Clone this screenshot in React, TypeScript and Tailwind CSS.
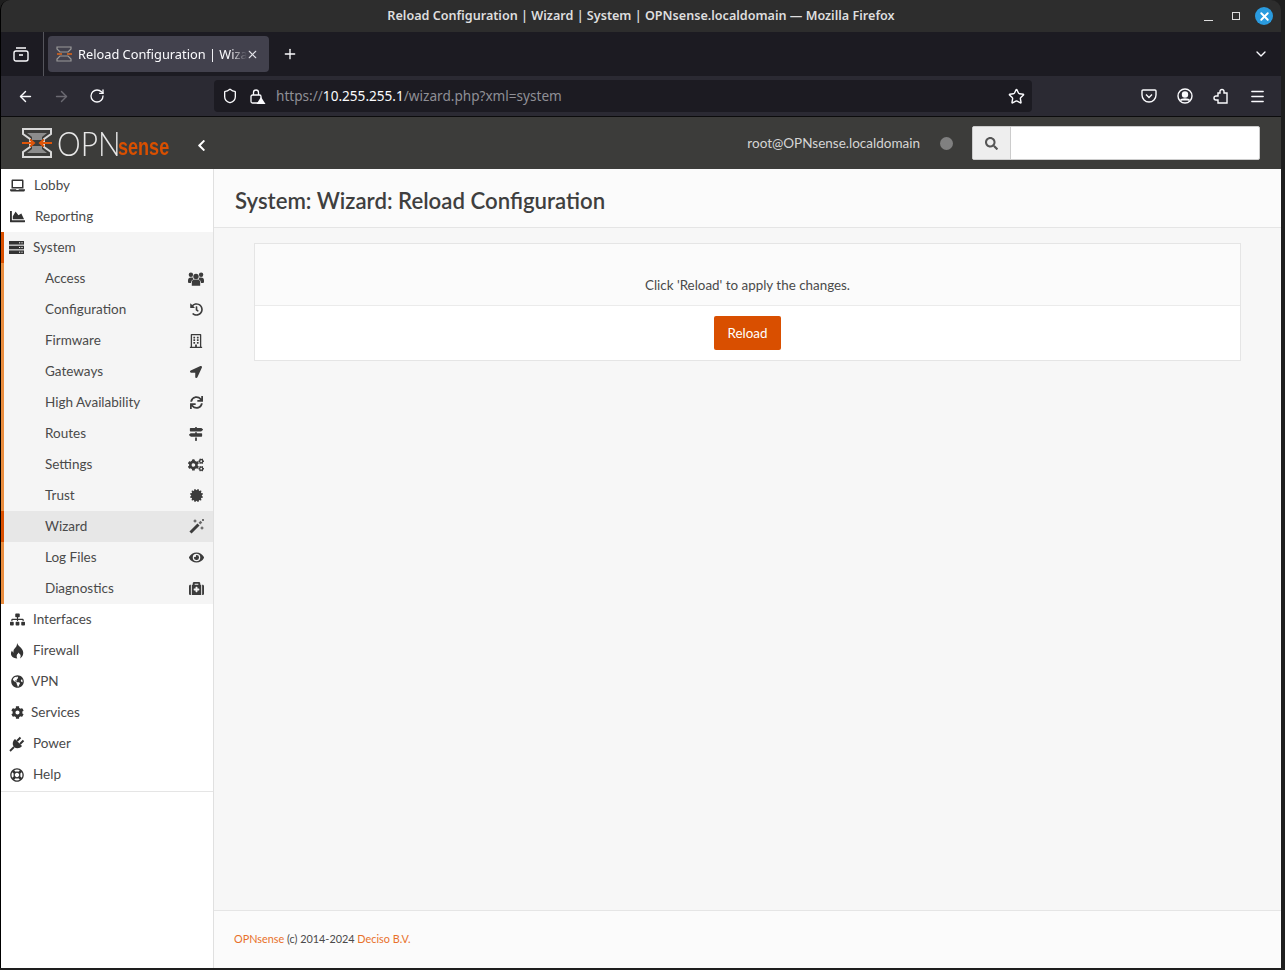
import { ReactNode } from "react"
import {
  FaLaptop, FaChartArea, FaHistory, FaRegBuilding, FaLocationArrow, FaSync,
  FaMapSigns, FaCogs, FaCertificate, FaEye, FaMedkit, FaSitemap, FaGlobeAmericas,
  FaCog, FaRegLifeRing, FaSearch, FaChevronLeft,
} from "react-icons/fa"
import { ArrowLeft, ArrowRight, RotateCw, Shield, Star, Menu, Plus, X, ChevronDown } from "lucide-react"

function UsersIcon() {
  return (
    <svg width="16" height="14" viewBox="0 0 16 14" fill="currentColor">
      <circle cx="8" cy="4.4" r="2.7" />
      <circle cx="2.9" cy="2.8" r="2.2" />
      <circle cx="13.1" cy="2.8" r="2.2" />
      <path d="M3.8 13.8v-3.4a3 3 0 0 1 3-3h2.4a3 3 0 0 1 3 3v3.4z" />
      <path d="M0 8.6a3 3 0 0 1 3-3h1.6a4 4 0 0 0 .9 1.6A4 4 0 0 0 3 10.4V11H1a1 1 0 0 1-1-1z" />
      <path d="M16 8.6a3 3 0 0 0-3-3h-1.6a4 4 0 0 1-.9 1.6 4 4 0 0 1 2.5 3.2v.6h2a1 1 0 0 0 1-1z" />
    </svg>
  )
}

function WandIcon() {
  return (
    <svg width="15" height="15" viewBox="0 0 15 15" fill="none" stroke="currentColor">
      <path d="M1.5 13.5l8-8" strokeWidth="3" />
      <path d="M10.4 4.6l2-2" strokeWidth="2.4" opacity="0.75" />
      <path d="M6 .5v3M4.5 2h3M13 7.5v3M11.5 9h3M14 0v2M13 1h2" strokeWidth="0.9" />
    </svg>
  )
}

function ServerIcon() {
  return (
    <svg width="15" height="13" viewBox="0 0 15 13" fill="#333">
      <rect y="0" width="15" height="3.6" />
      <rect y="4.7" width="15" height="3.6" />
      <rect y="9.4" width="15" height="3.6" />
      <g fill="#f5f5f5">
        <rect x="10" y="1.3" width="1.2" height="1" />
        <rect x="12.4" y="1.3" width="1.2" height="1" />
        <rect x="10" y="6" width="1.2" height="1" />
        <rect x="12.4" y="6" width="1.2" height="1" />
        <rect x="10" y="10.7" width="1.2" height="1" />
        <rect x="12.4" y="10.7" width="1.2" height="1" />
      </g>
    </svg>
  )
}

function FlameIcon() {
  return (
    <svg width="14" height="16" viewBox="0 0 14 16" fill="currentColor">
      <path d="M7 0c1 3 4 4 5.5 7 .8 1.7 1 3.4.4 5-.5 1.4-1.600 2.600-3 3.400.8-1 1-2.400.5-3.600-.6-.8-1.400-1.400-1.800-2.300-.4 1-1.100 1.300-1.600 2.200-.5 1-.4 2.400.3 3.800C5 15.400 2.500 14.800 1.500 12.800.6 11 .9 9 2 7.500c.2 1 .7 1.800 1.500 2.300C3 7.500 4 6 5.500 4.500 6.500 3.500 7.200 1.800 7 0z" />
    </svg>
  )
}

function PlugIcon() {
  return (
    <svg width="16" height="16" viewBox="0 0 16 16" fill="currentColor" stroke="currentColor">
      <path d="M6 3l7 7c-2 2.500-5.500 3-8 1-2-2.500-1.500-6 1-8z" strokeWidth="0" />
      <path d="M8 5l3.500-3.500M11 8l3.500-3.500" strokeWidth="2" fill="none" />
      <path d="M5 11l-4 4" strokeWidth="1.800" fill="none" />
    </svg>
  )
}

const subItems: { label: string; icon: ReactNode; active?: boolean }[] = [
  { label: "Access", icon: <UsersIcon /> },
  { label: "Configuration", icon: <FaHistory size={13} /> },
  { label: "Firmware", icon: <FaRegBuilding size={14} /> },
  { label: "Gateways", icon: <FaLocationArrow size={12} /> },
  { label: "High Availability", icon: <FaSync size={13} /> },
  { label: "Routes", icon: <FaMapSigns size={14} /> },
  { label: "Settings", icon: <FaCogs size={16} /> },
  { label: "Trust", icon: <FaCertificate size={13} /> },
  { label: "Wizard", icon: <WandIcon />, active: true },
  { label: "Log Files", icon: <FaEye size={15} /> },
  { label: "Diagnostics", icon: <FaMedkit size={15} /> },
]

function TopItem({ icon, label, gap }: { icon: ReactNode; label: string; gap: string }) {
  return (
    <div className={`flex h-[31px] items-center pl-2 text-[#4a4a4a] ${gap}`}>
      <span className="flex w-[16px] justify-center text-[#333]">{icon}</span>
      <span>{label}</span>
    </div>
  )
}

function Sidebar() {
  return (
    <aside className="flex w-[213px] shrink-0 flex-col border-r border-[#e0e0e0] bg-white pt-[1px] text-[13.5px]">
      <div className="border-b border-[#e5e5e5] pb-[1px]">
        <TopItem icon={<FaLaptop size={15} />} label="Lobby" gap="gap-[9px]" />
        <TopItem icon={<FaChartArea size={15} />} label="Reporting" gap="gap-[10px]" />
        <div className="flex h-[31px] items-center gap-[9px] border-l-[3px] border-[#d94f00] bg-[#f5f5f5] pl-[5px] text-[#4a4a4a]">
          <span className="flex w-[15px] justify-center"><ServerIcon /></span>
          <span>System</span>
        </div>
        <div className="flex flex-col border-l-[3px] border-[#e98d3f] bg-[#f5f5f5]">
          {subItems.map((item) => (
            <div
              key={item.label}
              className={`-ml-[3px] flex h-[31px] items-center justify-between border-l-[3px] pl-[41px] pr-[9px] text-[#4a4a4a] ${
                item.active ? "border-[#d94f00] bg-[#e7e7e7]" : "border-[#e98d3f]"
              }`}
            >
              <span>{item.label}</span>
              <span className="flex w-[16px] justify-center text-[#3c3c3c]">{item.icon}</span>
            </div>
          ))}
        </div>
        <TopItem icon={<FaSitemap size={15} />} label="Interfaces" gap="gap-[8px]" />
        <TopItem icon={<FlameIcon />} label="Firewall" gap="gap-[8px]" />
        <TopItem icon={<FaGlobeAmericas size={13} />} label="VPN" gap="gap-[6px]" />
        <TopItem icon={<FaCog size={13} />} label="Services" gap="gap-[6px]" />
        <TopItem icon={<PlugIcon />} label="Power" gap="gap-[8px]" />
        <TopItem icon={<FaRegLifeRing size={14} />} label="Help" gap="gap-[8px]" />
      </div>
    </aside>
  )
}

function Logo() {
  return (
    <div className="flex h-[32px] w-[150px] items-center">
      <svg width="30" height="30" viewBox="0 0 30 30" fill="none" className="shrink-0">
        <path d="M1 1h28v5l-7 5v8l7 5v5H1v-5l7-5v-8L1 6z" stroke="#d8d8d8" strokeWidth="2" />
        <path d="M5 5h20l-5 4v3H10V9zM5 25h20l-5-4v-3H10v3z" fill="#8c8c8c" />
        <path d="M0 15h12M8 11.500l4 3.500-4 3.500M30 15H18M22 11.500L18 15l4 3.500" stroke="#e0560a" strokeWidth="2" />
      </svg>
      <span className="ml-[5px] inline-block w-[61px] origin-left whitespace-nowrap text-[34px] font-light leading-none text-[#e8e8e8] [font-family:Lato,sans-serif] [transform:scaleX(0.88)]">OPN</span>
      <span className="mt-[7px] inline-block w-[49px] origin-left text-[21px] font-bold leading-none text-[#d94f00] [font-family:'Liberation_Sans',sans-serif] [transform:scale(0.86,1.1)]">sense</span>
    </div>
  )
}

export default function App() {
  return (
    <div className="h-[970px] w-[1285px] overflow-hidden bg-[#1e1e1e] [font-family:Lato,sans-serif]">
      <div className="mr-[4px] flex h-[968px] flex-col overflow-hidden rounded-t-[10px] border-l border-black">
        {/* title bar */}
        <div className="relative flex h-[32px] shrink-0 items-center justify-center bg-[#2d2d2d] pt-[1px] text-[12.6px] font-semibold text-[#dedede] [font-family:'Noto_Sans',sans-serif]">
          <span>Reload Configuration | Wizard | System | OPNsense.localdomain — Mozilla Firefox</span>
          <div className="absolute right-[8px] top-[7px] flex items-center">
            <span className="mt-[8px] h-[1px] w-[9px] bg-[#ddd]" />
            <span className="ml-[19px] h-[8px] w-[8px] border border-[#ddd]" />
            <span className="ml-[15px] flex h-[18px] w-[18px] items-center justify-center rounded-full bg-[#2a9bdf]">
              <X size={13} strokeWidth={3.5} className="text-white" />
            </span>
          </div>
        </div>
        {/* tab strip */}
        <div className="flex h-[44px] shrink-0 items-center bg-[#1c1b22] text-[12.8px] text-[#fbfbfe] [font-family:'Noto_Sans',sans-serif]">
          <div className="flex h-full w-[43px] items-center justify-center border-r border-[#55555c] pr-[2px]">
            <svg width="16" height="15" viewBox="0 0 16 15" fill="none" stroke="#fbfbfe" strokeWidth="1.4">
              <rect x="1" y="4" width="14" height="10" rx="2" />
              <path d="M3 1h10M6 8h4" />
            </svg>
          </div>
          <div className="ml-[4px] flex h-[36px] w-[221px] items-center rounded-[4px] bg-[#42414d] pl-[8px]">
            <svg width="16" height="16" viewBox="0 0 16 16" fill="none" className="shrink-0">
              <path d="M1 1h14v2l-3 3H4L1 3zM1 15h14v-2l-3-3H4l-3 3z" stroke="#999" strokeWidth="1.2" />
              <path d="M1 8h5M11 8h5" stroke="#e0661a" strokeWidth="1.6" />
            </svg>
            <span className="ml-[6px] w-[169px] overflow-hidden whitespace-nowrap pt-[1px] [mask-image:linear-gradient(to_right,black_90%,transparent)]">Reload Configuration | Wizard | System</span>
            <X size={13} className="-ml-[1px] shrink-0 text-[#e0e0e6]" />
          </div>
          <Plus size={16} className="ml-[13px]" />
          <ChevronDown size={16} className="ml-auto mr-[12px]" />
        </div>
        {/* nav bar */}
        <div className="flex h-[41px] shrink-0 items-center border-b border-[#0c0c0d] bg-[#2b2a33] text-[#fbfbfe]">
          <ArrowLeft size={17} className="ml-[16px]" />
          <ArrowRight size={17} className="ml-[19px] text-[#6b6a72]" />
          <RotateCw size={16} className="ml-[19px]" />
          <div className="ml-[109px] flex h-[32px] w-[818px] items-center rounded-[4px] bg-[#1c1b22] pl-[8px] text-[13.6px] [font-family:'Noto_Sans',sans-serif]">
            <Shield size={16} />
            <svg width="17" height="17" viewBox="0 0 17 17" className="ml-[11px]" fill="none" stroke="#fbfbfe" strokeWidth="1.3">
              <rect x="2" y="7" width="10" height="8" rx="1.5" />
              <path d="M4.5 7V4.5a2.5 2.5 0 0 1 5 0V7" />
              <path d="M12 9l4.5 7h-9z" fill="#fbfbfe" stroke="none" />
            </svg>
            <span className="ml-[10px] mt-[1px] text-[#8f8f96]">https://<span className="text-[#fbfbfe]">10.255.255.1</span>/wizard.php?xml=system</span>
            <Star size={17} className="ml-auto mr-[7px]" />
          </div>
          <div className="ml-auto mr-[15px] flex items-center gap-[20px]">
            <svg width="16" height="16" viewBox="0 0 16 16" fill="none" stroke="#fbfbfe" strokeWidth="1.4">
              <path d="M2 2h12a1 1 0 0 1 1 1v4a7 7 0 0 1-14 0V3a1 1 0 0 1 1-1z" />
              <path d="M5 6.5l3 3 3-3" />
            </svg>
            <svg width="16" height="16" viewBox="0 0 16 16" fill="none" stroke="#fbfbfe" strokeWidth="1.4">
              <circle cx="8" cy="8" r="7" />
              <circle cx="8" cy="6.5" r="2.5" fill="#fbfbfe" />
              <path d="M3.5 12.5c1-2 8-2 9 0" fill="#fbfbfe" />
            </svg>
            <svg width="16" height="16" viewBox="0 0 16 16" fill="none" stroke="#fbfbfe" strokeWidth="1.4">
              <path d="M9 1.5a2 2 0 0 0-2 2V5H5v3H3a2 2 0 0 0 0 4h2v3h9V5h-3V3.5a2 2 0 0 0-2-2z" />
            </svg>
            <Menu size={17} />
          </div>
        </div>
        {/* opnsense header */}
        <div className="flex h-[52px] shrink-0 items-center bg-[#3c3c3a] pl-[21px]">
          <Logo />
          <FaChevronLeft size={13} className="ml-[23px] mt-[5px] text-white" />
          <span className="ml-auto text-[13.5px] text-[#d5d5d5]">root@OPNsense.localdomain</span>
          <span className="ml-[20px] h-[13px] w-[13px] rounded-full bg-[#808080]" />
          <div className="ml-[19px] mr-[21px] flex h-[34px] w-[288px] overflow-hidden rounded-[2px] border border-[#ccc] bg-white">
            <div className="flex w-[38px] items-center justify-center border-r border-[#ccc] bg-[#eeeeee] text-[#555]">
              <FaSearch size={13} />
            </div>
          </div>
        </div>
        {/* page */}
        <div className="flex min-h-0 flex-1">
          <Sidebar />
          <main className="flex min-w-0 flex-1 flex-col bg-[#f7f7f7]">
            <div className="flex h-[59px] shrink-0 items-center border-b border-[#e5e5e5] bg-[#fbfbfb] pl-[21px] pt-[5px] text-[22.2px] font-semibold text-[#3f3f3f]">
              System: Wizard: Reload Configuration
            </div>
            <div className="flex-1 px-[40px] pt-[15px]">
              <div className="border border-[#e5e5e5] bg-white text-[13.4px] text-[#4a4a4a]">
                <div className="flex h-[62px] items-end justify-center border-b border-[#ebebeb] bg-[#fbfbfb] pb-[10px]">
                  Click 'Reload' to apply the changes.
                </div>
                <div className="flex h-[54px] items-center justify-center">
                  <button className="h-[34px] w-[67px] rounded-[2px] bg-[#d94f00] text-white">Reload</button>
                </div>
              </div>
            </div>
            <div className="flex h-[58px] shrink-0 items-center border-t border-[#e5e5e5] bg-[#fbfbfb] pl-[20px] text-[10.85px] text-[#4a4a4a]">
              <span><span className="text-[#e8702a]">OPNsense</span> (c) 2014-2024 <span className="text-[#e8702a]">Deciso B.V.</span></span>
            </div>
          </main>
        </div>
      </div>
    </div>
  )
}
